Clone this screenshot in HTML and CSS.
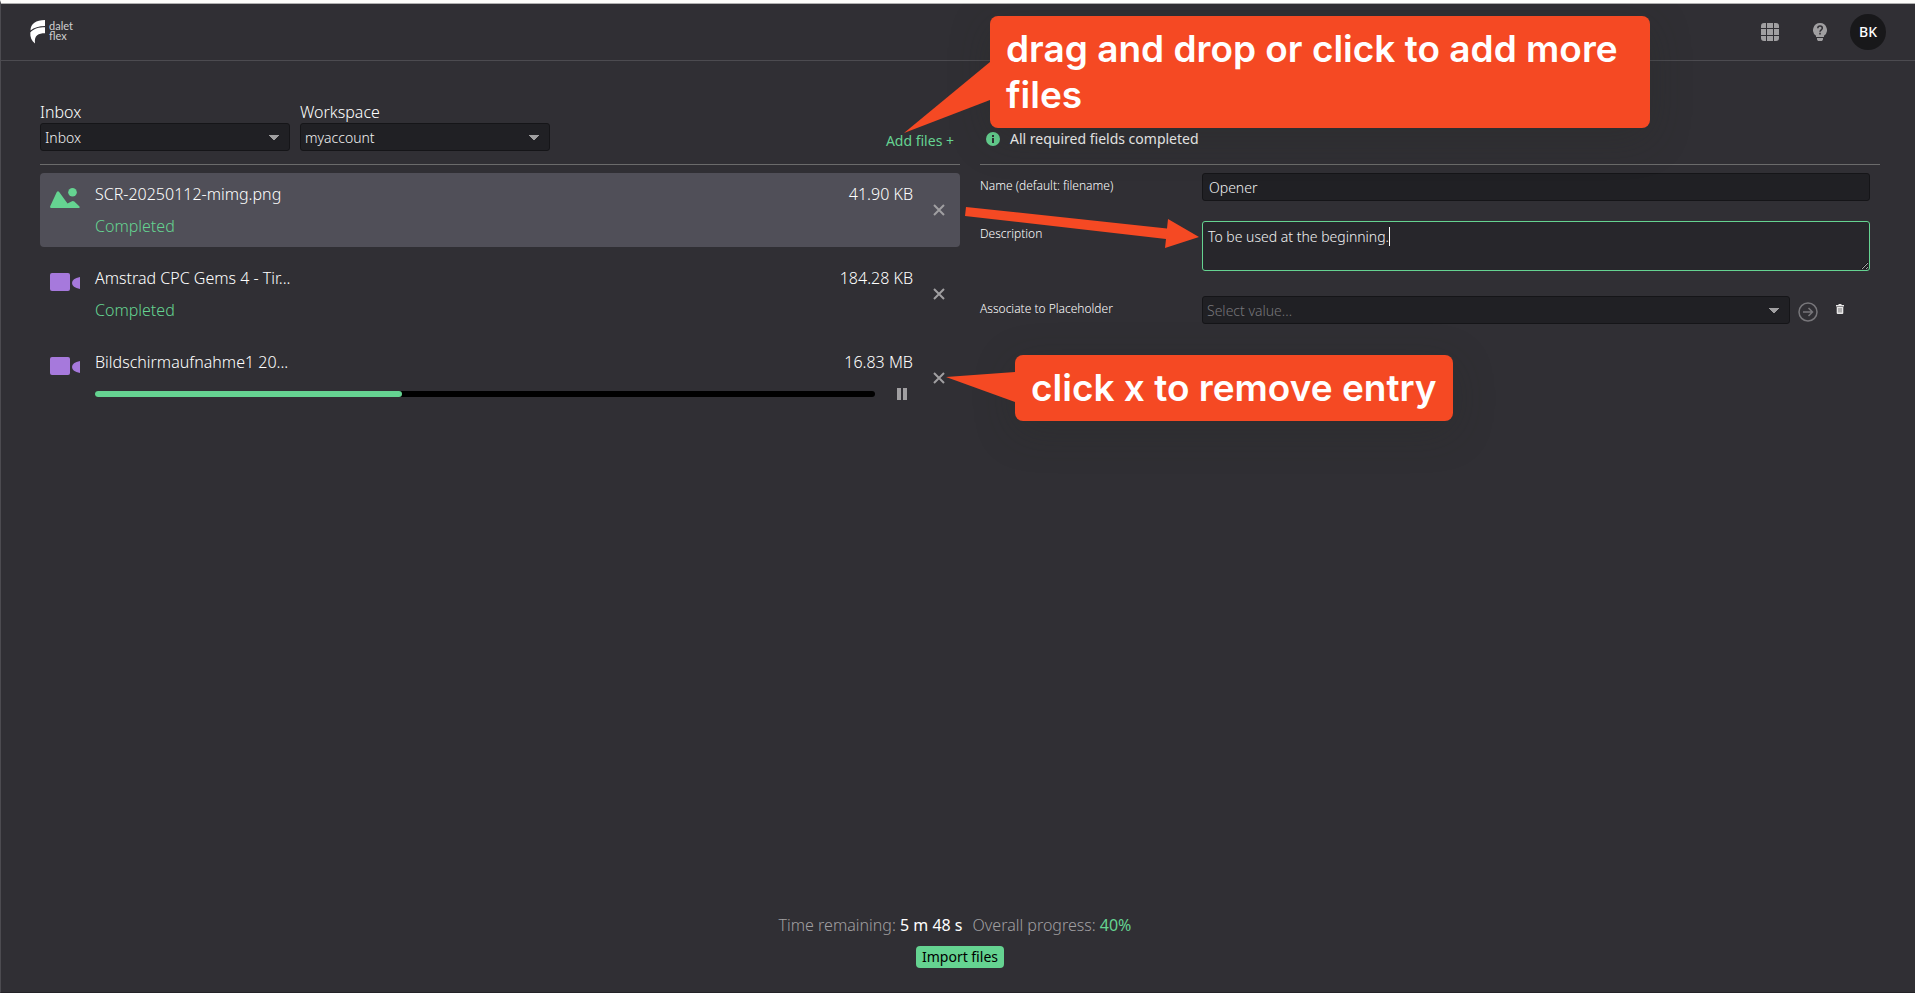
FILE: index.html
```html
<!DOCTYPE html>
<html lang="en">
<head>
  <meta charset="UTF-8">
  <meta name="viewport" content="width=device-width, initial-scale=1.0">
  <title>Dalet Flex</title>
  <link rel="stylesheet" href="styles.css">
</head>
<body>
  <header class="topbar">
    <a class="logo" href="#" aria-label="dalet flex">
      <svg width="16" height="24" viewBox="0 0 16 24" fill="#fff">
        <path d="M0.500 10.500C0.500 4 6 0 15 0v6C9 6 4 7.500 0.500 10.500z"/>
        <path d="M0.300 12.500C4 8.500 9 7.300 15 7.300v6C8.500 13.300 4 15 5 23.500C1.500 21 0 17 0.300 12.500z"/>
      </svg>
      <span class="logo-text">dalet<br>flex</span>
    </a>
    <nav class="topbar-actions">
      <button class="icon-btn" type="button" aria-label="Applications">
        <svg width="18" height="18" viewBox="0 0 18 18" fill="#a09fa1">
          <path d="M3 0h2v5H0V3a3 3 0 0 1 3-3zM6 0h6v5H6zM13 0h2a3 3 0 0 1 3 3v2h-5zM0 6h5v6H0zM6 6h6v6H6zM13 6h5v6h-5zM0 13h5v5H3a3 3 0 0 1-3-3zM6 13h6v5H6zM13 13h5v2a3 3 0 0 1-3 3h-2z"/>
        </svg>
      </button>
      <button class="icon-btn" type="button" aria-label="Help">
        <svg width="14" height="18" viewBox="0 0 14 18">
          <path fill="#a09fa1" d="M7 0a7 7 0 0 0-4 12.700V14h8v-1.300A7 7 0 0 0 7 0zM4 15h6v1.500L9 18H5l-1-1.500z"/>
          <path fill="none" stroke="#302f34" stroke-width="1.500" d="M4.800 5.200C4.900 2.400 9.300 2.400 9.300 5.200C9.300 6.800 7 6.800 7 8.700M7 9.800v1.600"/>
        </svg>
      </button>
      <button class="avatar" type="button">BK</button>
    </nav>
  </header>

  <main class="content">
    <section class="files">
      <div class="panel-head">
        <div class="picker">
          <label for="inbox">Inbox</label>
          <select id="inbox"><option>Inbox</option></select>
        </div>
        <div class="picker">
          <label for="workspace">Workspace</label>
          <select id="workspace"><option>myaccount</option></select>
        </div>
        <button class="add-files" type="button">Add files +</button>
      </div>

      <ul class="file-list">
        <li class="file selected">
          <svg class="file-icon" width="30" height="20" viewBox="0 0 30 20" fill="#65d391">
            <path d="M1.200 20Q-0.400 19.800 0.300 18L6.800 4Q8 2.400 9.200 4L17.500 15.500L21.500 13.400Q23 12.700 24.300 13.600L29.500 18.500Q30 20 28.500 20z"/>
            <circle cx="22.500" cy="4.300" r="4.300"/>
          </svg>
          <div class="file-info">
            <div class="file-line"><span>SCR-20250112-mimg.png</span><span>41.90 KB</span></div>
            <div class="status">Completed</div>
          </div>
          <button class="remove" type="button" aria-label="Remove">
            <svg width="12" height="12" viewBox="0 0 12 12"><path d="M1 1l10 10M11 1L1 11"/></svg>
          </button>
        </li>
        <li class="file">
          <svg class="file-icon" width="30" height="20" viewBox="0 0 30 20" fill="#a679dc">
            <rect y="1" width="20" height="18" rx="2"/>
            <path d="M30 5v12Q22 15.500 22 11T30 5z"/>
          </svg>
          <div class="file-info">
            <div class="file-line"><span>Amstrad CPC Gems 4 - Tir...</span><span>184.28 KB</span></div>
            <div class="status">Completed</div>
          </div>
          <button class="remove" type="button" aria-label="Remove">
            <svg width="12" height="12" viewBox="0 0 12 12"><path d="M1 1l10 10M11 1L1 11"/></svg>
          </button>
        </li>
        <li class="file">
          <svg class="file-icon" width="30" height="20" viewBox="0 0 30 20" fill="#a679dc">
            <rect y="1" width="20" height="18" rx="2"/>
            <path d="M30 5v12Q22 15.500 22 11T30 5z"/>
          </svg>
          <div class="file-info">
            <div class="file-line"><span>Bildschirmaufnahme1 20...</span><span>16.83 MB</span></div>
            <div class="upload">
              <div class="bar"><div class="bar-fill" style="width: 39.4%"></div></div>
              <button class="pause" type="button" aria-label="Pause">
                <svg width="10" height="12" viewBox="0 0 10 12" fill="#a09fa1"><path d="M0 0h4v12H0zM6 0h4v12H6z"/></svg>
              </button>
            </div>
          </div>
          <button class="remove" type="button" aria-label="Remove">
            <svg width="12" height="12" viewBox="0 0 12 12"><path d="M1 1l10 10M11 1L1 11"/></svg>
          </button>
          <div class="callout callout-remove">
            <svg class="tail" width="69" height="30" viewBox="0 0 69 30"><path d="M0 5L69 0v30z"/></svg>
            click x to remove entry
          </div>
        </li>
      </ul>
    </section>

    <section class="details">
      <div class="panel-head">
        <div class="notice">
          <svg width="14" height="14" viewBox="0 0 14 14">
            <circle cx="7" cy="7" r="7" fill="#65d391"/>
            <path fill="#302f34" d="M6 3h2v2H6zM6 6h2v5H6z"/>
          </svg>
          All required fields completed
        </div>
      </div>
      <div class="callout callout-add">
        <svg class="tail" width="86" height="71" viewBox="0 0 86 71"><path d="M0 71L86 0v38z"/></svg>
        drag and drop or click to add more files
      </div>

      <form class="fields">
        <div class="field">
          <label for="name">Name (default: filename)</label>
          <input id="name" type="text" value="Opener">
        </div>
        <div class="field">
          <label for="description">Description</label>
          <div class="text-wrap">
            <textarea id="description">To be used at the beginning.</textarea>
            <span class="caret"></span>
          </div>
          <svg class="arrow" width="234" height="44" viewBox="0 0 234 44"><path d="M1 1L202 22.500L203 13L234 31L200 42L201 33L0 10z"/></svg>
        </div>
        <div class="field">
          <label for="placeholder">Associate to Placeholder</label>
          <select id="placeholder" class="empty"><option>Select value...</option></select>
          <button class="go" type="button" aria-label="Open">
            <svg width="20" height="20" viewBox="0 0 20 20" fill="none" stroke="#77767a" stroke-width="1.500">
              <circle cx="10" cy="10" r="9"/><path d="M5 10h9M10.500 6l4 4-4 4"/>
            </svg>
          </button>
          <button class="trash" type="button" aria-label="Delete">
            <svg width="8" height="10" viewBox="0 0 8 10">
              <path fill="#e6e6e6" d="M0 1h2.500V0h3v1H8v1.500H0zM0.700 3h6.600v6q0 1-1 1H1.700q-1 0-1-1z"/>
              <path stroke="#302f34" stroke-width="0.600" d="M3 4v4.500M5 4v4.500"/>
            </svg>
          </button>
        </div>
      </form>
    </section>
  </main>

  <footer class="footer">
    <p class="progress-text">
      <span>Time remaining: <b>5 m 48 s</b></span>
      <span>Overall progress: <b class="percent">40%</b></span>
    </p>
    <button class="import" type="button">Import files</button>
  </footer>
</body>
</html>
```

FILE: styles.css
```css
* { box-sizing: border-box; }

body {
  margin: 0;
  min-height: 100vh;
  display: flex;
  flex-direction: column;
  background: #302f34;
  border-top: 3px solid #fdfdfb;
  border-left: 1px solid #4c4b50;
  border-bottom: 1px solid #232227;
  color: #fff;
  font-family: "Noto Sans", sans-serif;
  font-size: 16px;
  font-weight: 300;
  line-height: 22px;
}

button, input, select, textarea { font: inherit; color: inherit; }
button { display: flex; align-items: center; justify-content: center; padding: 0; border: 0; background: none; cursor: pointer; }
svg { display: block; flex: none; }

/* header */
.topbar {
  display: flex;
  align-items: center;
  justify-content: space-between;
  height: 58px;
  padding: 0 29px;
  border-top: 1px solid #b0b0b0;
  border-bottom: 1px solid #4c4b50;
}
.logo { display: flex; gap: 3px; color: #d0d0d0; text-decoration: none; }
.logo-text { font-family: Lato, sans-serif; font-size: 11px; font-weight: 400; line-height: 10px; padding-top: 1px; }
.topbar-actions { display: flex; align-items: center; }
.icon-btn { width: 50px; height: 36px; }
.avatar { width: 36px; height: 36px; margin-left: 5px; border-radius: 50%; background: #18181a; font-size: 14px; font-weight: 500; }

/* panels */
.content { flex: 1; display: flex; gap: 20px; padding: 40px 35px 0 39px; }
.files { flex: 0 0 50%; }
.details { flex: 1; position: relative; }
.panel-head { display: flex; gap: 10px; height: 64px; border-bottom: 1px solid #6b6b6b; }
.picker { width: 250px; }
.picker label { display: block; }
.add-files { height: 22px; margin: 29px 6px 0 auto; color: #65d391; font-size: 14px; font-weight: 400; }
.notice { display: flex; align-items: center; gap: 10px; height: 22px; margin: 27px 0 0 6px; font-size: 14px; font-weight: 400; }

input, select, textarea {
  width: 100%;
  height: 28px;
  padding: 0 6px;
  border: 1px solid #151518;
  border-radius: 3px;
  outline: 0;
  background: #202024;
  color: #f2f2f2;
  font-size: 14px;
}
/* two gradients make the halves of the drop-down arrow */
select {
  appearance: none;
  display: block;
  padding: 2px 4px 0;
  background-image: linear-gradient(to bottom right, #a09fa1 50%, transparent 51%), linear-gradient(to bottom left, #a09fa1 50%, transparent 51%);
  background-repeat: no-repeat;
  background-position: right 10px center, right 15px center;
  background-size: 5px 5px;
}

/* file list */
.file-list { list-style: none; margin: 8px 0 0; padding: 0; display: flex; flex-direction: column; gap: 10px; }
.file { position: relative; display: flex; height: 74px; padding: 10px; border-radius: 4px; }
.file.selected { background: #504f58; }
.file-icon { margin-top: 5px; }
.file-info { flex: 1; margin-left: 15px; }
.file-line { display: flex; justify-content: space-between; }
.status { margin-top: 10px; color: #65d391; }
.remove { width: 12px; margin: 0 5px 0 20px; }
.remove path { stroke: #a09fa1; stroke-width: 2; }
.upload { display: flex; align-items: center; height: 12px; margin-top: 15px; }
.bar { flex: 1; height: 6px; border-radius: 3px; background: #000; }
.bar-fill { height: 6px; border-radius: 3px; background: #65d391; }
.pause { margin: 0 6px 0 22px; }

/* form */
.fields { display: flex; flex-direction: column; margin: 8px 10px 0 0; }
.field { position: relative; display: flex; margin-bottom: 20px; }
.field label { flex: 0 0 222px; padding-top: 2px; font-size: 12px; }
.text-wrap { position: relative; flex: 1; margin-bottom: 5px; }
textarea { display: block; height: 50px; padding: 4px 5px; border-color: #65d391; background-color: #27262b; }
.caret { position: absolute; left: 187px; top: 6px; width: 1px; height: 19px; background: #fff; }
select.empty { color: #77767a; }
.go { width: 20px; height: 32px; margin-left: 8px; }
.trash { width: 20px; height: 26px; margin: 0 23px 0 16px; }

/* annotations */
.callout {
  position: absolute;
  z-index: 1;
  padding: 10px 16px;
  border-radius: 8px;
  background: #f54923;
  box-shadow: 0 10px 40px rgba(40, 42, 36, 0.3);
  color: #fff;
  font-family: Inter, sans-serif;
  font-size: 37px;
  font-weight: 600;
  line-height: 46px;
}
.callout-add { left: 10px; top: -85px; width: 660px; }
.callout-remove { left: 975px; top: 14px; white-space: nowrap; }
.tail { position: absolute; right: 100%; fill: #f54923; }
.callout-add .tail { top: 46px; }
.callout-remove .tail { top: 17px; }
.arrow { position: absolute; left: -15px; top: -15px; fill: #f54923; }

/* footer */
.footer { display: flex; flex-direction: column; align-items: center; padding: 0 0 24px 4px; }
.progress-text { display: flex; gap: 10px; margin: 0 0 10px; padding-right: 10px; color: #a09fa1; }
.progress-text b { color: #fff; font-weight: 400; }
.progress-text .percent { color: #65d391; }
.import { height: 22px; padding: 0 6px; border-radius: 4px; background: #65d391; color: #000; font-size: 14px; font-weight: 400; }
```
